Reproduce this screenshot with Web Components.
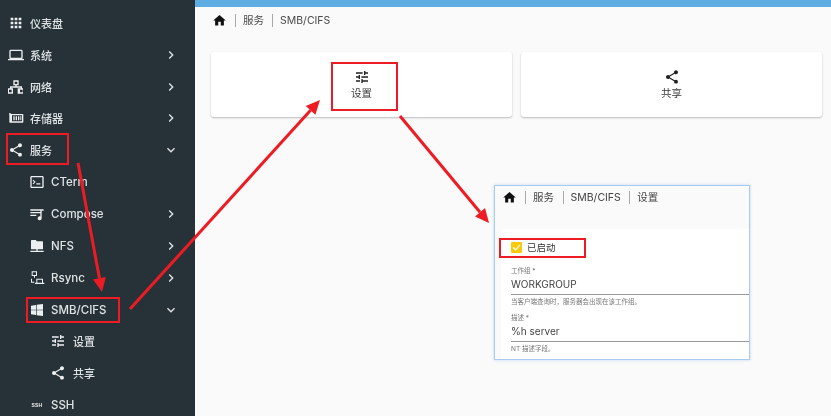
<!DOCTYPE html>
<html lang="zh">
<head>
<meta charset="utf-8">
<title>SMB/CIFS</title>
<style>
  html, body { margin: 0; height: 100%; }
  body { font-family: Inter, "Noto Sans CJK SC", sans-serif; overflow: hidden; }
</style>
</head>
<body>
<app-shell>
  <side-nav slot="nav">
    <nav-item icon="apps" label="仪表盘"></nav-item>
    <nav-item icon="laptop" label="系统" arrow="right"></nav-item>
    <nav-item icon="lan" label="网络" arrow="right"></nav-item>
    <nav-item icon="storage" label="存储器" arrow="right"></nav-item>
    <nav-item icon="share" label="服务" arrow="down"></nav-item>
    <nav-item level="1" icon="console" label="CTerm"></nav-item>
    <nav-item level="1" icon="compose" label="Compose" arrow="right"></nav-item>
    <nav-item level="1" icon="nfs" label="NFS" arrow="right"></nav-item>
    <nav-item level="1" icon="rsync" label="Rsync" arrow="right"></nav-item>
    <nav-item level="1" icon="windows" label="SMB/CIFS" arrow="down"></nav-item>
    <nav-item level="2" icon="tune" label="设置"></nav-item>
    <nav-item level="2" icon="share" label="共享"></nav-item>
    <nav-item level="1" icon="ssh" label="SSH"></nav-item>
  </side-nav>
  <crumb-bar>
    <span>服务</span>
    <span>SMB/CIFS</span>
  </crumb-bar>
  <div slot="cards" style="display:contents">
    <action-card icon="tune" label="设置"></action-card>
    <action-card icon="share" label="共享"></action-card>
  </div>
  <settings-shot slot="over"></settings-shot>
  <mark-up slot="over"></mark-up>
</app-shell>

<script>
const ICONS = {
  apps: "M4 8h4V4H4v4zm6 12h4v-4h-4v4zm-6 0h4v-4H4v4zm0-6h4v-4H4v4zm6 0h4v-4h-4v4zm6-10v4h4V4h-4zm-6 4h4V4h-4v4zm6 6h4v-4h-4v4zm0 6h4v-4h-4v4z",
  laptop: "M20 18c1.1 0 2-.9 2-2V6c0-1.1-.9-2-2-2H4c-1.1 0-2 .9-2 2v10c0 1.1.9 2 2 2H0v2h24v-2h-4zM4 6h16v10H4V6z",
  lan: "M8 2h8v7.500h-3V11h8v3h1.500v8h-8v-8H19v-1H5v1h2.500v8h-8v-8H3v-3h8V9.500H8V2zm2 2v3.500h4V4h-4zM1.500 16v4h4v-4h-4zm16.500 0v4h4v-4h-4z",
  storage: "M1.500 5H4l1 1h17a1 1 0 0 1 1 1v11a1 1 0 0 1-1 1H3a1 1 0 0 1-1-1V7L1.500 6.500V5zM6 8v9h15V8H6zm2 1.500h2v6H8v-6zm3.500 0h2v6h-2v-6zm3.500 0h2v6h-2v-6zm3.500 0h1.500v6h-1.500v-6z",
  share: "M18 16.080c-.76 0-1.440.3-1.960.77L8.910 12.700c.05-.23.09-.46.09-.7s-.04-.47-.09-.7l7.050-4.110c.54.5 1.250.81 2.040.81 1.660 0 3-1.340 3-3s-1.340-3-3-3-3 1.340-3 3c0 .24.04.47.09.7L8.040 9.810C7.500 9.310 6.790 9 6 9c-1.660 0-3 1.340-3 3s1.340 3 3 3c.79 0 1.500-.31 2.040-.81l7.120 4.160c-.05.21-.08.43-.08.65 0 1.610 1.310 2.920 2.920 2.920 1.610 0 2.920-1.310 2.920-2.920s-1.310-2.920-2.920-2.920z",
  console: "M20 3H4c-1.100 0-2 .9-2 2v14c0 1.100.9 2 2 2h16c1.100 0 2-.9 2-2V5c0-1.100-.9-2-2-2zm0 16H4V5h16v14zM6.500 8.500 5.400 9.600 7.800 12l-2.400 2.400 1.100 1.100L10 12 6.500 8.500zM11 14h6v1.800h-6z",
  compose: "M2 5h15v2H2zm0 4h15v2H2zm0 4h9v2H2zm15-8h5v2h-3v11.500a3 3 0 1 1-2-2.800V5z",
  nfs: "M4 3h6l2 2h8a1 1 0 0 1 1 1v10a1 1 0 0 1-1 1h-7v2h9v2H2v-2h9v-2H4a1 1 0 0 1-1-1V4a1 1 0 0 1 1-1z",
  rsync: "M4 2h8v7H9v2.500H7.500V9H4V2zm1.500 1.500v4h5v-4h-5zM3 13h1.500v4.500H8V19H3v-6zm8 0h10v6h2v2H9v-2h2v-6zm1.500 1.500V19h7v-4.500h-7z",
  windows: "M3 5.500 10.500 4.400V11.500H3V5.500zM11.500 4.300 21 3V11.500H11.500V4.300zM3 12.500H10.500V19.600L3 18.500V12.500zM11.500 12.500H21V21L11.500 19.700V12.500z",
  tune: "M3 17v2h6v-2H3zM3 5v2h10V5H3zm10 16v-2h8v-2h-8v-2h-2v6h2zM7 9v2H3v2h4v2h2V9H7zm14 4v-2H11v2h10zm-6-4h2V7h4V5h-4V3h-2v6z",
  home: "M10 20v-6h4v6h5v-8h3L12 3 2 12h3v8z",
  right: "M8.590 16.590 13.170 12 8.590 7.410 10 6l6 6-6 6z",
  down: "M7.410 8.590 12 13.170l4.590-4.580L18 10l-6 6-6-6z"
};

function svgIcon(name, size) {
  return `<svg viewBox="0 0 24 24" width="${size}" height="${size}" fill="currentColor" style="display:block"><path d="${ICONS[name]}"></path></svg>`;
}

class AppShell extends HTMLElement {
  constructor() {
    super();
    this.attachShadow({ mode: "open" });
    this.shadowRoot.innerHTML = `
      <style>
        :host { display: flex; position: relative; width: 831px; height: 416px; overflow: hidden; background: #fafafa; filter: blur(.35px); }
        .main { flex: 1; min-width: 0; display: flex; flex-direction: column; }
        .top { height: 7px; background: #5dade2; }
        .cards { display: flex; gap: 9px; padding: 0 9px 0 16px; }
      </style>
      <slot name="nav"></slot>
      <div class="main">
        <div class="top"></div>
        <slot></slot>
        <div class="cards"><slot name="cards"></slot></div>
      </div>
      <slot name="over"></slot>
    `;
  }
}

class SideNav extends HTMLElement {
  constructor() {
    super();
    this.attachShadow({ mode: "open" });
    this.shadowRoot.innerHTML = `
      <style>
        :host { display: flex; flex-direction: column; flex: none; width: 195px; height: 416px; padding-top: 7px; box-sizing: border-box; background: #263238; color: #eceff1; overflow: hidden; }
      </style>
      <slot></slot>
    `;
  }
}

class NavItem extends HTMLElement {
  constructor() {
    super();
    this.attachShadow({ mode: "open" });
    const level = +(this.getAttribute("level") || 0);
    const arrow = this.getAttribute("arrow");
    const icon = this.getAttribute("icon");
    const pad = [8, 29, 50][level];
    const gap = [6, 6, 7][level];
    this.shadowRoot.innerHTML = `
      <style>
        :host { display: flex; align-items: center; flex: none; height: 31.850px; padding-left: ${pad}px; font-size: ${level === 1 ? 11.500 : 11}px; font-weight: 500; color: #dfe3e5; }
        .icon { flex: none; width: 16px; height: 16px; color: #eceff1; }
        .ssh { display: block; font: 700 5px/16px "Liberation Sans", sans-serif; letter-spacing: .2px; text-align: center; }
        .label { margin-left: ${gap}px; white-space: nowrap; }
        .arrow { margin-left: auto; margin-right: 16px; width: 16px; height: 16px; color: #dfe3e5; }
      </style>
      <span class="icon">${icon === "ssh" ? `<span class="ssh">SSH</span>` : svgIcon(icon, 16)}</span>
      <span class="label">${this.getAttribute("label")}</span>
      ${arrow ? `<span class="arrow">${svgIcon(arrow, 16)}</span>` : ""}
    `;
  }
}

class CrumbBar extends HTMLElement {
  constructor() {
    super();
    this.attachShadow({ mode: "open" });
    this.shadowRoot.innerHTML = `
      <style>
        :host { display: flex; align-items: center; height: 26px; padding: 0 0 0 17px; margin-bottom: 19px; font-size: 10.500px; color: #4a4a4a; }
        .home { color: #111; margin-right: 8px; }
        ::slotted(span) { display: flex; align-items: center; height: 13px; padding-left: 7px; margin-right: 8px; border-left: 1px solid #aaa; line-height: 13px; }
      </style>
      <span class="home">${svgIcon("home", 15)}</span>
      <slot></slot>
    `;
  }
}

class ActionCard extends HTMLElement {
  constructor() {
    super();
    this.attachShadow({ mode: "open" });
    this.shadowRoot.innerHTML = `
      <style>
        :host { display: flex; flex-direction: column; align-items: center; flex: 1; height: 65px; padding-top: 17px; box-sizing: border-box; background: #fff; border-radius: 3px; box-shadow: 0 1px 2px rgba(0,0,0,.25); color: #3a3a3a; font-size: 10.500px; }
        .icon { color: #212121; height: 16px; }
        .label { margin-top: 1px; line-height: 15px; }
      </style>
      <span class="icon">${svgIcon(this.getAttribute("icon"), 16)}</span>
      <span class="label">${this.getAttribute("label")}</span>
    `;
  }
}

class FormField extends HTMLElement {
  constructor() {
    super();
    this.attachShadow({ mode: "open" });
    this.shadowRoot.innerHTML = `
      <style>
        :host { display: block; margin-left: 10px; }
        .cap { font-size: 6.500px; line-height: 9px; color: #777; }
        .val { font-size: 10px; line-height: 14px; color: #444; border-bottom: 1px solid #999; padding: 1px 0 3px; }
        .hint { font-size: 6.500px; line-height: 9px; color: #777; margin-top: 3px; }
      </style>
      <div class="cap">${this.getAttribute("label")} *</div>
      <div class="val">${this.getAttribute("value")}</div>
      <div class="hint">${this.getAttribute("hint")}</div>
    `;
  }
}

class SettingsShot extends HTMLElement {
  constructor() {
    super();
    this.attachShadow({ mode: "open" });
    this.shadowRoot.innerHTML = `
      <style>
        :host { position: absolute; left: 494px; top: 185px; width: 256px; height: 175px; box-sizing: border-box; display: flex; flex-direction: column; overflow: hidden; background: #fafafa; border: 1px solid #a8cbef; box-shadow: 0 0 3px #bcd8f5; color: #444; }
        .crumbs { display: flex; align-items: center; height: 22px; padding: 0 0 0 7px; font-size: 10.500px; flex: none; }
        .home { color: #111; margin-right: 8px; }
        .crumbs span.t { height: 13px; line-height: 13px; padding-left: 7px; margin-right: 8.500px; border-left: 1px solid #aaa; }
        .panel { flex: 1; margin: 21px 0 0 6px; background: #fff; display: flex; flex-direction: column; }
        .check { display: flex; align-items: center; gap: 5px; height: 18px; margin: 9px 0 11px 10px; font-size: 9.500px; color: #333; flex: none; }
        .box { width: 11px; height: 11px; border-radius: 1px; background: #fbcb0a; display: flex; }
        form-field + form-field { margin-top: 7px; }
      </style>
      <div class="crumbs">
        <span class="home">${svgIcon("home", 15)}</span>
        <span class="t">服务</span><span class="t">SMB/CIFS</span><span class="t">设置</span>
      </div>
      <div class="panel">
        <div class="check">
          <span class="box"><svg viewBox="0 0 12 12" width="11" height="11" fill="none" stroke="#fff" stroke-width="1.300"><path d="M2.500 6 5 8.500 9.500 3.500"></path></svg></span>
          <span>已启动</span>
        </div>
        <form-field label="工作组" value="WORKGROUP" hint="当客户端查询时，服务器会出现在该工作组。"></form-field>
        <form-field label="描述" value="%h server" hint="NT 描述字段。"></form-field>
      </div>
    `;
  }
}

class MarkUp extends HTMLElement {
  constructor() {
    super();
    this.attachShadow({ mode: "open" });
    const arrow = (x1, y1, x2, y2) => {
      const a = Math.atan2(y2 - y1, x2 - x1), l = 14, w = 6.500;
      const bx = x2 - l * Math.cos(a), by = y2 - l * Math.sin(a);
      const px = -Math.sin(a) * w, py = Math.cos(a) * w;
      const pts = `${x2},${y2} ${bx + px},${by + py} ${bx - px},${by - py}`;
      return `<line x1="${x1}" y1="${y1}" x2="${bx}" y2="${by}"></line><polygon points="${pts}"></polygon>`;
    };
    this.shadowRoot.innerHTML = `
      <style>
        :host { position: absolute; inset: 0; pointer-events: none; }
        svg { display: block; }
        line { stroke: #ed1c24; stroke-width: 3; }
        polygon { fill: #ed1c24; }
        rect { fill: none; stroke: #ed1c24; stroke-width: 2; }
      </style>
      <svg width="831" height="416">
        <rect x="7" y="134" width="61" height="30"></rect>
        <rect x="27" y="298" width="92" height="24"></rect>
        <rect x="332" y="63" width="65" height="47"></rect>
        <rect x="500" y="239" width="85" height="18"></rect>
        ${arrow(78, 163, 102, 292)}
        ${arrow(130, 309, 320, 100)}
        ${arrow(400, 116, 489, 223)}
      </svg>
    `;
  }
}

customElements.define("app-shell", AppShell);
customElements.define("side-nav", SideNav);
customElements.define("nav-item", NavItem);
customElements.define("crumb-bar", CrumbBar);
customElements.define("action-card", ActionCard);
customElements.define("form-field", FormField);
customElements.define("settings-shot", SettingsShot);
customElements.define("mark-up", MarkUp);
</script>
</body>
</html>
